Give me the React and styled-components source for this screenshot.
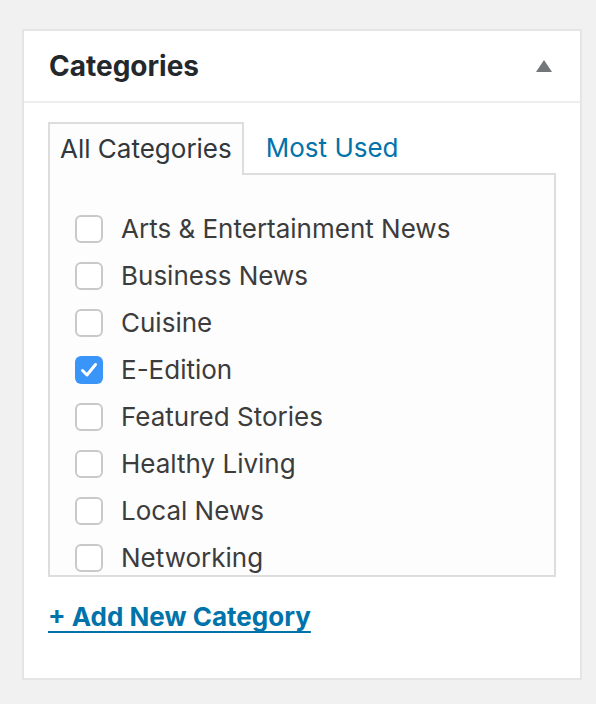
import React, { useState } from 'react'
import styled, { createGlobalStyle } from 'styled-components'

const GlobalStyle = createGlobalStyle`
  html, body {
    margin: 0;
    padding: 0;
    background: #f1f1f1;
    font-family: Inter, "Open Sans", "Liberation Sans", sans-serif;
  }
`

const Page = styled.div`
  padding: 29px 14px 24px 22px;
`

const Postbox = styled.div`
  width: 556px;
  height: 647px;
  border: 2px solid #e5e5e5;
  background: #fff;
  display: flex;
  flex-direction: column;
`

const Header = styled.div`
  height: 70px;
  border-bottom: 2px solid #eee;
  display: flex;
  align-items: center;
  justify-content: space-between;
  padding: 0 27px 0 25px;
`

const Title = styled.h2`
  margin: 0;
  font-size: 28px;
  font-weight: 700;
  color: #23282d;
`

const Toggle = styled.button`
  border: 0;
  background: none;
  padding: 0;
  width: 18px;
  height: 14px;
  cursor: pointer;
  display: flex;
`

const Body = styled.div`
  padding: 19px 24px 0 24px;
  display: flex;
  flex-direction: column;
`

const Tabs = styled.ul`
  list-style: none;
  margin: 0;
  padding: 0;
  display: flex;
  align-items: flex-end;
  height: 51px;
  position: relative;
  z-index: 1;
`

const Tab = styled.li`
  box-sizing: border-box;
  height: ${p => (p.active ? '53px' : '51px')};
  margin-bottom: ${p => (p.active ? '-2px' : '0')};
  padding: 0 ${p => (p.active ? '10px' : '20px')} 3px;
  display: flex;
  align-items: center;
  border: 2px solid ${p => (p.active ? '#ddd' : 'transparent')};
  border-bottom: 0;
  background: ${p => (p.active ? '#fdfdfd' : 'transparent')};
  font-size: 26px;
  color: ${p => (p.active ? '#32373c' : '#0073aa')};
  cursor: pointer;
`

const Panel = styled.div`
  box-sizing: border-box;
  height: 404px;
  border: 2px solid #ddd;
  background: #fdfdfd;
  padding: 30px 0 0 25px;
  overflow: hidden;
`

const List = styled.ul`
  list-style: none;
  margin: 0;
  padding: 0;
`

const Row = styled.li`
  height: 47px;
  display: flex;
  align-items: center;
  gap: 18px;
  font-size: 26px;
  color: #3c3c3c;
`

const Box = styled.span`
  box-sizing: border-box;
  width: 28px;
  height: 28px;
  border-radius: 6px;
  border: ${p => (p.checked ? '0' : '2px solid #c9c9c9')};
  background: ${p => (p.checked ? '#3a95f8' : '#fff')};
  display: flex;
  align-items: center;
  justify-content: center;
  flex: none;
`

const AddLink = styled.a`
  margin-top: 24px;
  align-self: flex-start;
  font-size: 26px;
  font-weight: 700;
  color: #0073aa;
  text-decoration: underline;
  text-decoration-thickness: 2px;
  text-decoration-skip-ink: none;
  text-underline-offset: 5px;
`

const categories = [
  { name: 'Arts & Entertainment News' },
  { name: 'Business News' },
  { name: 'Cuisine' },
  { name: 'E-Edition', checked: true },
  { name: 'Featured Stories' },
  { name: 'Healthy Living' },
  { name: 'Local News' },
  { name: 'Networking' }
]

const Check = ({ checked }) => (
  <Box checked={checked}>
    {checked && (
      <svg width="18" height="16" viewBox="0 0 18 16">
        <path d="M2.5 8.5 L7 13 L15.5 2.5" fill="none" stroke="#fff" strokeWidth="3" strokeLinecap="round" strokeLinejoin="round" />
      </svg>
    )}
  </Box>
)

const App = () => {
  const [tab, setTab] = useState('all')

  return (
    <Page>
      <GlobalStyle />
      <Postbox>
        <Header>
          <Title>Categories</Title>
          <Toggle aria-label="Toggle panel">
            <svg width="18" height="14" viewBox="0 0 18 14">
              <polygon points="9,1 17,13 1,13" fill="#72777c" />
            </svg>
          </Toggle>
        </Header>
        <Body>
          <Tabs>
            <Tab active={tab === 'all'} onClick={() => setTab('all')}>All Categories</Tab>
            <Tab active={tab === 'pop'} onClick={() => setTab('pop')}>Most Used</Tab>
          </Tabs>
          <Panel>
            <List>
              {categories.map(c => (
                <Row key={c.name}>
                  <Check checked={c.checked} />
                  {c.name}
                </Row>
              ))}
            </List>
          </Panel>
          <AddLink href="#">+ Add New Category</AddLink>
        </Body>
      </Postbox>
    </Page>
  )
}

export default App
